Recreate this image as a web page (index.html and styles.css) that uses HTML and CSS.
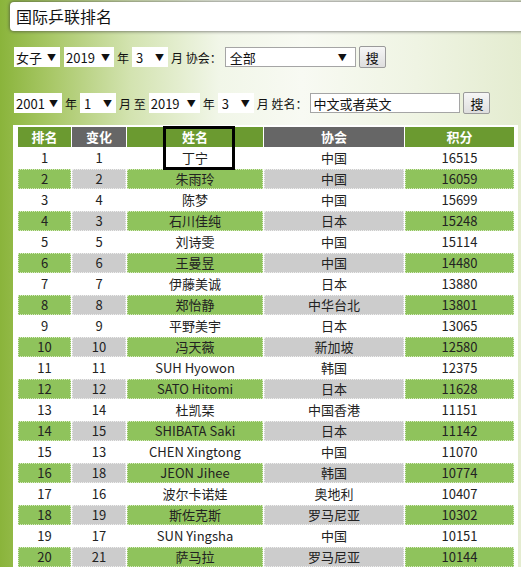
FILE: index.html
```html
<!DOCTYPE html>
<html lang="zh">
<head>
<meta charset="utf-8">
<title>国际乒联排名</title>
<link rel="stylesheet" href="styles.css">
</head>
<body>
<div class="page">
  <div class="title">国际乒联排名</div>

  <form class="filters">
    <div class="row row1">
      <span class="sel w46"><select><option>女子</option></select><i>▼</i></span>
      <span class="sel w50"><select><option>2019</option></select><i>▼</i></span>
      <span class="lbl">年</span>
      <span class="sel w36"><select><option>3</option></select><i>▼</i></span>
      <span class="lbl">月 协会：</span>
      <span class="sel bordered w131"><select><option>全部</option></select><i>▼</i></span>
      <button type="button" class="btn">搜</button>
    </div>
    <div class="row row2">
      <span class="sel w48"><select><option>2001</option></select><i>▼</i></span>
      <span class="lbl">年</span>
      <span class="sel w36"><select><option>1</option></select><i>▼</i></span>
      <span class="lbl">月 至</span>
      <span class="sel w51"><select><option>2019</option></select><i>▼</i></span>
      <span class="lbl">年</span>
      <span class="sel w36"><select><option>3</option></select><i>▼</i></span>
      <span class="lbl">月 姓名：</span>
      <input class="name" type="text" value="中文或者英文">
      <button type="button" class="btn">搜</button>
    </div>
  </form>

  <div class="tablewrap">
    <table class="rank">
      <thead>
        <tr><th class="g c1">排名</th><th class="d c2">变化</th><th class="g c3">姓名</th><th class="d c4">协会</th><th class="g c5">积分</th></tr>
      </thead>
      <tbody>
        <tr><td>1</td><td>1</td><td>丁宁</td><td>中国</td><td>16515</td></tr>
        <tr><td>2</td><td>2</td><td>朱雨玲</td><td>中国</td><td>16059</td></tr>
        <tr><td>3</td><td>4</td><td>陈梦</td><td>中国</td><td>15699</td></tr>
        <tr><td>4</td><td>3</td><td>石川佳纯</td><td>日本</td><td>15248</td></tr>
        <tr><td>5</td><td>5</td><td>刘诗雯</td><td>中国</td><td>15114</td></tr>
        <tr><td>6</td><td>6</td><td>王曼昱</td><td>中国</td><td>14480</td></tr>
        <tr><td>7</td><td>7</td><td>伊藤美诚</td><td>日本</td><td>13880</td></tr>
        <tr><td>8</td><td>8</td><td>郑怡静</td><td>中华台北</td><td>13801</td></tr>
        <tr><td>9</td><td>9</td><td>平野美宇</td><td>日本</td><td>13065</td></tr>
        <tr><td>10</td><td>10</td><td>冯天薇</td><td>新加坡</td><td>12580</td></tr>
        <tr><td>11</td><td>11</td><td>SUH Hyowon</td><td>韩国</td><td>12375</td></tr>
        <tr><td>12</td><td>12</td><td>SATO Hitomi</td><td>日本</td><td>11628</td></tr>
        <tr><td>13</td><td>14</td><td>杜凯琹</td><td>中国香港</td><td>11151</td></tr>
        <tr><td>14</td><td>15</td><td>SHIBATA Saki</td><td>日本</td><td>11142</td></tr>
        <tr><td>15</td><td>13</td><td>CHEN Xingtong</td><td>中国</td><td>11070</td></tr>
        <tr><td>16</td><td>18</td><td>JEON Jihee</td><td>韩国</td><td>10774</td></tr>
        <tr><td>17</td><td>16</td><td>波尔卡诺娃</td><td>奥地利</td><td>10407</td></tr>
        <tr><td>18</td><td>19</td><td>斯佐克斯</td><td>罗马尼亚</td><td>10302</td></tr>
        <tr><td>19</td><td>17</td><td>SUN Yingsha</td><td>中国</td><td>10151</td></tr>
        <tr><td>20</td><td>21</td><td>萨马拉</td><td>罗马尼亚</td><td>10144</td></tr>
      </tbody>
    </table>
    <div class="highlight"></div>
  </div>
</div>
</body>
</html>
```

FILE: styles.css
```css
html, body {
  margin: 0;
  padding: 0;
  overflow: hidden;
}
body {
  width: 521px;
  height: 567px;
  background: linear-gradient(to right, #8ab43b 0%, #a9c868 10%, #d3e3b0 25%, #f1f6e8 42%, #f8faf3 58%, #eff4e3 80%, #e4ecd0 100%);
  font-family: "Noto Sans CJK SC", "Open Sans", sans-serif;
  color: #222;
}
.page {
  display: flex;
  flex-direction: column;
}
.title {
  margin: 2px -20px 0 10px;
  height: 29px;
  line-height: 29px;
  padding-left: 6px;
  background: #fff;
  border-radius: 4px;
  box-shadow: 0 0 3px 1px rgba(60, 60, 60, 0.55);
  font-size: 16px;
  color: #111;
}
.filters {
  display: flex;
  flex-direction: column;
  gap: 24px;
  margin: 15px 0 0 14px;
}
.row {
  display: flex;
  align-items: center;
  height: 22px;
  font-size: 12px;
}
.row1 .sel + .sel { margin-left: 4px; }
.lbl {
  margin: 0 3px;
  white-space: nowrap;
  color: #111;
  font-size: 12px;
}
.sel {
  display: inline-flex;
  align-items: center;
  height: 20px;
  background: #fff;
  box-sizing: border-box;
  padding: 0 4px 0 2px;
}
.sel select {
  appearance: none;
  -webkit-appearance: none;
  border: 0;
  background: transparent;
  font: inherit;
  font-size: 13px;
  color: #111;
  padding: 0;
  margin: 0;
  flex: 1;
  min-width: 0;
  outline: none;
}
.sel i {
  font-style: normal;
  font-size: 9px;
  color: #111;
}
.bordered { border: 1px solid #a5a5a5; padding-left: 4px; padding-right: 8px; }
.w46 { width: 46px; }
.w48 { width: 48px; }
.w50 { width: 50px; }
.w51 { width: 51px; }
.w36 { width: 36px; padding-left: 4px; }
.w131 { width: 131px; }
.btn {
  width: 27px;
  height: 22px;
  margin-left: 3px;
  padding: 0;
  border: 1px solid #9a9a9a;
  border-radius: 2px;
  background: linear-gradient(#f6f6f6, #dedede);
  font: inherit;
  font-size: 13px;
  color: #111;
}
.name {
  width: 150px;
  height: 20px;
  box-sizing: border-box;
  border: 1px solid #a5a5a5;
  padding: 0 2px;
  font: inherit;
  font-size: 13px;
  color: #111;
  margin-left: 0;
}
.tablewrap {
  position: relative;
  margin: 11px 3px 0 13px;
  background: #fff;
  padding: 2px 2px 0 5px;
}
.rank {
  width: 100%;
  border-collapse: separate;
  border-spacing: 1px 1px;
  margin: -1px 0 0 -1px;
  table-layout: fixed;
  font-size: 13px;
}
.rank th, .rank td {
  height: 20px;
  padding: 0;
  text-align: center;
  line-height: 18px;
  white-space: nowrap;
  border: 1px dotted transparent;
  box-sizing: border-box;
}
.rank th {
  color: #fff;
  font-weight: bold;
  height: 19px;
}
.rank th.g { background: #6b9a30; }
.rank th.d { background: #666666; }
.c1 { width: 53px; }
.c2 { width: 54px; }
.c3 { width: 136px; }
.c4 { width: 140px; }
.c5 { width: 109px; }
.rank tbody tr:nth-child(even) td { background: #8fc35c; border-color: #d6ebc0; }
.rank tbody tr:nth-child(even) td:nth-child(2),
.rank tbody tr:nth-child(even) td:nth-child(4) { background: #cccccc; border-color: #eeeeee; }
.highlight {
  position: absolute;
  left: 150px;
  top: 1px;
  width: 66px;
  height: 38px;
  border: 3px solid #000;
}
```
